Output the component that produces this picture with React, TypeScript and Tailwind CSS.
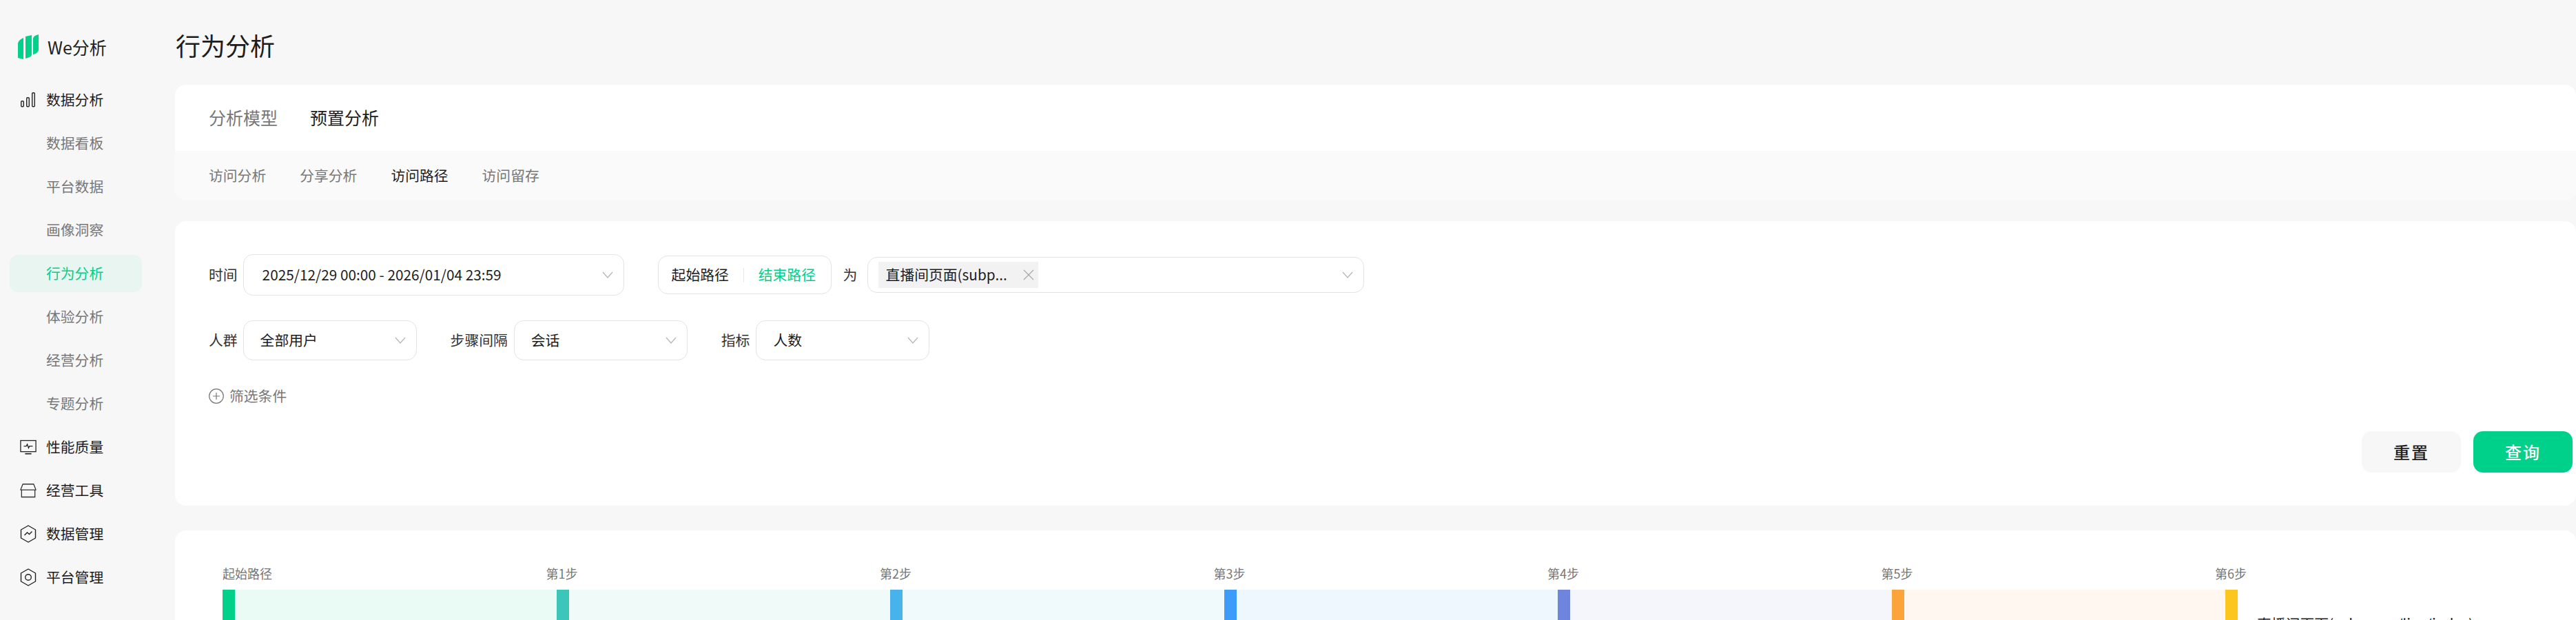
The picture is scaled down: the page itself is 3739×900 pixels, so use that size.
import type { ReactNode } from 'react';

const subMenu = ['数据看板', '平台数据', '画像洞察', '行为分析', '体验分析', '经营分析', '专题分析'];

const steps = [
  { label: '起始路径', bar: 'bg-[#00d18a]', bg: 'bg-[#eafbf5]' },
  { label: '第1步', bar: 'bg-[#3cc6ba]', bg: 'bg-[#f0faf9]' },
  { label: '第2步', bar: 'bg-[#47b2ec]', bg: 'bg-[#f0f9fc]' },
  { label: '第3步', bar: 'bg-[#3d9bfa]', bg: 'bg-[#eff7fe]' },
  { label: '第4步', bar: 'bg-[#6f84dd]', bg: 'bg-[#f4f6fc]' },
  { label: '第5步', bar: 'bg-[#fca43c]', bg: 'bg-[#fff7f0]' },
  { label: '第6步', bar: 'bg-[#fdc61e]', bg: 'bg-white' },
];

const marks = Array.from({ length: 13 * 19 }, (_, i) => i);

function Chevron() {
  return (
    <svg width="16" height="10" viewBox="0 0 16 10" fill="none" className="shrink-0">
      <path d="M1 1l7 8 7-8" stroke="#b5b5b5" strokeWidth="1.2" />
    </svg>
  );
}

function Logo() {
  return (
    <svg width="30" height="36" viewBox="0 0 30 36" className="shrink-0">
      <path d="M0 14c0-4 3-7 8-9v31l-8-2z" fill="#00d18a" />
      <path d="M11 3l9-2v28c0 2-1 3-3 4l-6 2z" fill="#00d18a" />
      <path d="M22 6c0-3 4-5 8-6v22c0 3-3 6-8 7z" fill="#00d18a" />
    </svg>
  );
}

function IconBars() {
  return (
    <svg width="24" height="24" viewBox="0 0 24 24" fill="none" stroke="#222" strokeWidth="1.4">
      <rect x="1.700" y="13.700" width="3.600" height="8" rx="1.200" />
      <rect x="9.700" y="8.700" width="3.600" height="13" rx="1.200" />
      <rect x="17.700" y="1.700" width="3.600" height="20" rx="1.200" />
    </svg>
  );
}

function IconMonitor() {
  return (
    <svg width="26" height="24" viewBox="0 0 26 24" fill="none" stroke="#222" strokeWidth="1.4">
      <rect x="1" y="1.700" width="24" height="17.500" />
      <path d="M8 22.500h10" strokeWidth="1.800" />
      <path d="M6 10.500h4l1.500-3 2 6 1.500-3h5" />
    </svg>
  );
}

function IconStore() {
  return (
    <svg width="26" height="24" viewBox="0 0 26 24" fill="none" stroke="#333" strokeWidth="1.4">
      <path d="M1 11l3.500-9h17L25 11z" strokeLinejoin="round" />
      <path d="M2.500 11v11.300h21V11" />
    </svg>
  );
}

function IconHexChart() {
  return (
    <svg width="24" height="26" viewBox="0 0 24 26" fill="none" stroke="#222" strokeWidth="1.4">
      <path d="M12 1l10.500 6v12L12 25 1.500 19V7z" strokeLinejoin="round" />
      <path d="M6.500 15l4-4 3 2.500 4-4" />
    </svg>
  );
}

function IconHexRing() {
  return (
    <svg width="24" height="26" viewBox="0 0 24 26" fill="none" stroke="#222" strokeWidth="1.4">
      <path d="M12 1l10.500 6v12L12 25 1.500 19V7z" strokeLinejoin="round" />
      <circle cx="12" cy="13" r="4.300" />
    </svg>
  );
}

function NavGroup({ icon, label }: { icon: ReactNode; label: string }) {
  return (
    <div className="flex h-[54px] items-center">
      <div className="flex w-[67px] shrink-0 justify-center pl-[29px] pr-[14px]">{icon}</div>
      <span className="text-[20.8px] text-[#1d1d1d]">{label}</span>
    </div>
  );
}

function Sidebar() {
  return (
    <aside className="flex w-[254px] shrink-0 flex-col bg-[#f7f7f7]">
      <div className="flex items-center gap-[13px] pl-[26px] pt-[50px]">
        <Logo />
        <span className="text-[25px] leading-[36px] text-[#222]">We分析</span>
      </div>
      <nav className="mt-[32px] flex flex-col gap-[9px] pl-[14px] pr-[48px]">
        <div className="-ml-[14px]">
          <NavGroup icon={<IconBars />} label="数据分析" />
        </div>
        {subMenu.map((name) => (
          <div
            key={name}
            className={`flex h-[54px] items-center rounded-[12px] pl-[53px] text-[20.8px] ${
              name === '行为分析' ? 'bg-[#e8f5f0] text-[#00d18a]' : 'text-[#777]'
            }`}
          >
            {name}
          </div>
        ))}
        <div className="-ml-[14px] flex flex-col gap-[9px]">
          <NavGroup icon={<IconMonitor />} label="性能质量" />
          <NavGroup icon={<IconStore />} label="经营工具" />
          <NavGroup icon={<IconHexChart />} label="数据管理" />
          <NavGroup icon={<IconHexRing />} label="平台管理" />
        </div>
      </nav>
    </aside>
  );
}

function Select({ width, children, height = 'h-[58px]' }: { width: string; children: ReactNode; height?: string }) {
  return (
    <div className={`flex ${width} ${height} shrink-0 items-center justify-between rounded-[14px] border border-[#e3e3e6] bg-white pl-[24px] pr-[15px] text-[20.8px] text-[#1d1d1d]`}>
      <div className="flex min-w-0 items-center">{children}</div>
      <Chevron />
    </div>
  );
}

function TopTabs() {
  return (
    <section className="shrink-0 overflow-hidden rounded-[16px] bg-white">
      <div className="flex h-[96px] items-center gap-[47px] pl-[49px] text-[25px]">
        <span className="text-[#777]">分析模型</span>
        <span className="text-[#1d1d1d]">预置分析</span>
      </div>
      <div className="flex h-[72px] items-center gap-[49px] bg-[#fafafa] pl-[49px] text-[20.8px] text-[#777]">
        <span>访问分析</span>
        <span>分享分析</span>
        <span className="text-[#1d1d1d]">访问路径</span>
        <span>访问留存</span>
      </div>
    </section>
  );
}

function FilterCard() {
  return (
    <section className="mt-[30px] h-[413px] shrink-0 rounded-[16px] bg-white pl-[49px] pr-[5px] pt-[48px]">
      <div className="flex h-[60px] items-center">
        <span className="shrink-0 text-[20.8px] text-[#333]">时间</span>
        <div className="ml-[8px]">
          <Select width="w-[553px]" height="h-[60px]">
            <span className="pl-[3px]">2025/12/29 00:00 - 2026/01/04 23:59</span>
          </Select>
        </div>
        <div className="ml-[49px] flex h-[56px] w-[252px] items-center rounded-[14px] border border-[#e3e3e6] pl-[19px] text-[20.8px]">
          <span className="text-[#1d1d1d]">起始路径</span>
          <span className="mx-[21px] h-[21px] w-px bg-[#e8e8e8]" />
          <span className="text-[#00d18a]">结束路径</span>
        </div>
        <span className="ml-[17px] w-[35px] text-[20.8px] text-[#333]">为</span>
        <div className="flex h-[52px] w-[721px] items-center justify-between rounded-[14px] border border-[#e3e3e6] pl-[15px] pr-[15px]">
          <div className="flex h-[38px] w-[232px] items-center justify-between bg-[#f2f2f2] pl-[11px] pr-[5px] text-[20.8px] text-[#1d1d1d]">
            <span>直播间页面(subp...</span>
            <svg width="18" height="16" viewBox="0 0 18 16" fill="none" stroke="#a6a6a6" strokeWidth="1.2">
              <path d="M2 1l14 14M16 1L2 15" />
            </svg>
          </div>
          <Chevron />
        </div>
      </div>
      <div className="mt-[36px] flex h-[58px] items-center">
        <span className="shrink-0 text-[20.8px] text-[#333]">人群</span>
        <div className="ml-[8px]">
          <Select width="w-[252px]">全部用户</Select>
        </div>
        <span className="ml-[49px] text-[20.8px] text-[#333]">步骤间隔</span>
        <div className="ml-[9px]">
          <Select width="w-[252px]">会话</Select>
        </div>
        <span className="ml-[49px] text-[20.8px] text-[#333]">指标</span>
        <div className="ml-[9px]">
          <Select width="w-[252px]">人数</Select>
        </div>
      </div>
      <div className="mt-[36px] flex items-center gap-[8px] text-[20.8px] text-[#777]">
        <svg width="22" height="22" viewBox="0 0 22 22" fill="none" stroke="#777" strokeWidth="1.2">
          <circle cx="11" cy="11" r="10.300" />
          <path d="M11 6v10M6 11h10" />
        </svg>
        <span>筛选条件</span>
      </div>
      <div className="mt-[36px] flex justify-end gap-[18px]">
        <button type="button" className="h-[60px] w-[144px] rounded-[14px] bg-[#f7f7f7] text-[24px] font-medium tracking-[2px] text-[#1d1d1d]">
          重置
        </button>
        <button type="button" className="h-[60px] w-[144px] rounded-[14px] bg-[#00d18a] text-[24px] font-medium tracking-[2px] text-white">
          查询
        </button>
      </div>
    </section>
  );
}

function PathCard() {
  return (
    <section className="mt-[36px] h-[300px] shrink-0 rounded-t-[16px] bg-white pl-[69px] pt-[50px]">
      <div className="flex">
        {steps.map((s, i) => (
          <div key={s.label} className="w-[484.5px] shrink-0">
            <div className="h-[36px] text-[18px] leading-[24px] text-[#777]">
              <span className={i === 0 ? '' : '-ml-[15px]'}>{s.label}</span>
            </div>
            <div className={`flex h-[200px] ${s.bg}`}>
              <div className={`h-full w-[18px] shrink-0 ${s.bar}`} />
              {i === 6 && <div className="pl-[28px] pt-[34px] text-[20.8px] whitespace-nowrap text-[#1d1d1d]">直播间页面(subpages/live/index)</div>}
            </div>
          </div>
        ))}
      </div>
    </section>
  );
}

export default function App() {
  return (
    <div className="relative flex h-[900px] w-[3739px] overflow-hidden bg-[#f7f7f7] font-['Noto_Sans_CJK_SC','Noto_Sans',sans-serif]">
      <Sidebar />
      <main className="flex min-w-0 flex-1 flex-col">
        <div className="flex h-[123px] shrink-0 items-start pl-[1px] pt-[38px]">
          <h1 className="text-[36px] leading-[54px] text-[#1d1d1d]">行为分析</h1>
        </div>
        <TopTabs />
        <FilterCard />
        <PathCard />
      </main>
      {/* faint tiled watermark over the whole page */}
      <div className="pointer-events-none absolute inset-0 grid grid-cols-[repeat(19,206px)] auto-rows-[69px] pl-[8px] pt-[10px] font-['Liberation_Sans',sans-serif] text-[20px] leading-[69px] text-black/[0.012]">
        {marks.map((m) => (
          <span key={m}>rFSIDix</span>
        ))}
      </div>
    </div>
  );
}
